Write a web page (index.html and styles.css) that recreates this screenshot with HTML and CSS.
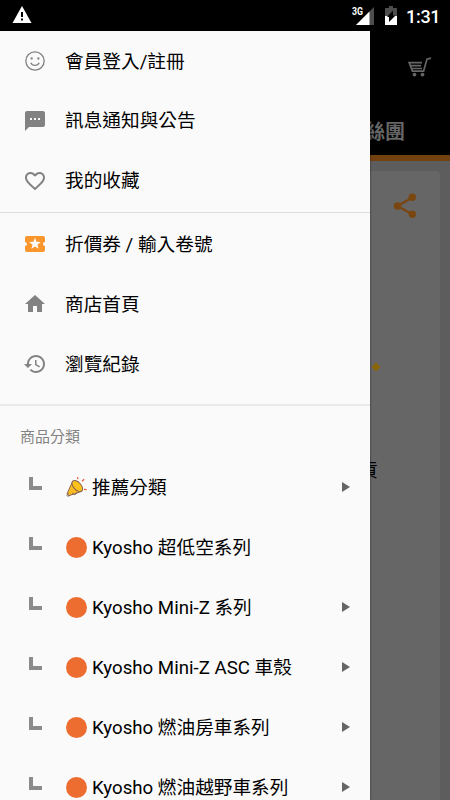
FILE: index.html
```html
<!DOCTYPE html>
<html lang="zh-TW">
<head>
    <meta charset="UTF-8">
    <meta name="viewport" content="width=device-width, initial-scale=1.0">
    <title>Kyosho</title>
    <link rel="stylesheet" href="styles.css">
</head>

<body>
    <div class="status-bar">
        <svg class="warning" width="20" height="18" viewBox="0 0 20 18">
            <path d="M10 0L19.5 17H.5z" fill="#fff"/>
            <path d="M9 6h2v5H9zM9 12.5h2v2H9z" fill="#000"/>
        </svg>
        <svg class="signal" width="24" height="20" viewBox="0 0 24 20">
            <path d="M22 1v18H4z" fill="#4d4d4d"/>
            <path d="M17.5 5.5V19H4z" fill="#fff"/>
            <text class="network" x="0" y="9" textLength="11" lengthAdjust="spacingAndGlyphs">3G</text>
        </svg>
        <svg class="battery" width="12" height="19" viewBox="0 0 12 19">
            <path d="M4 0h4v2h4v17H0V2h4z" fill="#4d4d4d"/>
            <path d="M0 10h12v9H0z" fill="#fff"/>
            <path d="M8 4.500v5h2.500L4 16v-5H2z" fill="#000"/>
        </svg>
        <span class="clock">1:31</span>
    </div>

    <div class="screen">
        <div class="page">
            <div class="toolbar">
                <svg width="24" height="20" viewBox="0 0 24 20" fill="none" stroke="#666" stroke-width="1.7">
                    <path d="M23 1.2l-4 .9-3.4 12H4.4L1.2 5.7H14M3 8.7h10M4 11.5h10"/>
                    <circle cx="6.5" cy="17.6" r="1.9" fill="#666" stroke="none"/>
                    <circle cx="14.5" cy="17.6" r="1.9" fill="#666" stroke="none"/>
                </svg>
            </div>
            <div class="tabs">粉絲團</div>
            <div class="tab-line"></div>
            <div class="card">
                <svg class="share" width="24" height="26" viewBox="0 0 24 26" fill="#7a4610">
                    <path d="M19.5 4.5L4.5 13l15 8.5" fill="none" stroke="#7a4610" stroke-width="2.2"/>
                    <circle cx="19.3" cy="4.3" r="3.7"/>
                    <circle cx="4.5" cy="13" r="3.7"/>
                    <circle cx="19.3" cy="21.3" r="3.7"/>
                </svg>
                <svg class="diamond" width="10" height="10" viewBox="0 0 10 10"><path d="M5 .5L9.5 5 5 9.5.5 5z" fill="#8c6508"/></svg>
                <div class="stock">現貨</div>
            </div>
        </div>

        <!-- 側邊選單 -->
        <div class="drawer">
            <div class="group group-account">
                <div class="item">
                    <svg class="icon" viewBox="0 0 24 24" fill="none" stroke="#828282" stroke-width="1.6">
                        <circle cx="12" cy="12" r="11"/>
                        <circle cx="8" cy="9" r="1.4" fill="#828282" stroke="none"/>
                        <circle cx="16" cy="9" r="1.4" fill="#828282" stroke="none"/>
                        <path d="M7 14c1.6 4.2 8.4 4.2 10 0"/>
                    </svg>
                    <span class="login">會員登入/註冊</span>
                </div>
                <div class="item">
                    <svg class="icon" viewBox="2 2 20 20" fill="#828282"><path d="M20 2H4c-1.1 0-2 .9-2 2v18l4-4h14c1.1 0 2-.9 2-2V4c0-1.100-.9-2-2-2zM9 11H7V9h2v2zm4 0h-2V9h2v2zm4 0h-2V9h2v2z"/></svg>
                    <span>訊息通知與公告</span>
                </div>
                <div class="item">
                    <svg class="icon" viewBox="2 2 20 20" fill="#828282"><path d="M16.500 3c-1.740 0-3.410.81-4.500 2.090C10.910 3.810 9.240 3 7.500 3 4.420 3 2 5.420 2 8.500c0 3.780 3.400 6.860 8.550 11.540L12 21.350l1.450-1.320C18.600 15.360 22 12.280 22 8.500 22 5.420 19.580 3 16.500 3zm-4.400 15.550l-.1.100-.1-.1C7.140 14.240 4 11.390 4 8.500 4 6.500 5.500 5 7.500 5c1.540 0 3.040.99 3.570 2.360h1.870C13.460 5.990 14.960 5 16.500 5c2 0 3.500 1.500 3.500 3.500 0 2.890-3.140 5.740-7.900 10.050z"/></svg>
                    <span>我的收藏</span>
                </div>
            </div>

            <div class="group group-shop">
                <div class="item">
                    <svg class="icon" viewBox="2 2 20 20" fill="#fb962d"><path d="M20 12c0-1.100.9-2 2-2V6c0-1.100-.9-2-2-2H4c-1.100 0-1.990.9-1.990 2v4c1.100 0 1.990.9 1.990 2s-.89 2-2 2v4c0 1.100.9 2 2 2h16c1.100 0 2-.9 2-2v-4c-1.100 0-2-.9-2-2zm-4.420 4.800L12 14.500l-3.580 2.300 1.080-4.120-3.290-2.690 4.240-.25L12 5.800l1.540 3.950 4.240.25-3.290 2.690 1.090 4.110z"/></svg>
                    <span>折價券 / 輸入卷號</span>
                </div>
                <div class="item">
                    <svg class="icon" viewBox="2 2 20 20" fill="#828282"><path d="M10 20v-6h4v6h5v-8h3L12 3 2 12h3v8z"/></svg>
                    <span>商店首頁</span>
                </div>
                <div class="item">
                    <svg class="icon history" viewBox="1 2 21 20" fill="#828282"><path d="M13 3c-4.970 0-9 4.030-9 9H1l3.890 3.890.07.140L9 12H6c0-3.870 3.130-7 7-7s7 3.130 7 7-3.130 7-7 7c-1.930 0-3.680-.79-4.940-2.060l-1.420 1.420C8.270 19.990 10.510 21 13 21c4.970 0 9-4.030 9-9s-4.030-9-9-9zm-1 5v5l4.280 2.540.72-1.210-3.500-2.080V8H12z"/></svg>
                    <span>瀏覽紀錄</span>
                </div>
            </div>

            <div class="heading">商品分類</div>
            <div class="categories">
                <div class="item">
                    <i class="branch"></i>
                    <svg class="horn" width="22" height="22" viewBox="0 0 22 22">
                        <path d="M7 4.500L1 17.800l2.300 1.700L16.500 15z" fill="#fdbd22" stroke="#84604e" stroke-width="1"/>
                        <path d="M3 17l-2 2.200.8 1 2.600-1M7 16.500c0 3 4.500 2.500 4.500-1" fill="none" stroke="#84604e" stroke-width="1"/>
                        <ellipse cx="11.800" cy="9.500" rx="4" ry="7" transform="rotate(-43 11.800 9.500)" fill="#fcc21b" stroke="#84604e" stroke-width="1"/>
                        <path d="M12 .2l.5 2M19 2.300l-2.200 2.200M18.800 13l2.800.3" stroke="#f05a35" stroke-width="1.300"/>
                    </svg>
                    <span>推薦分類</span>
                    <i class="arrow"></i>
                </div>
                <div class="item">
                    <i class="branch"></i>
                    <i class="dot"></i>
                    <span>Kyosho 超低空系列</span>
                </div>
                <div class="item">
                    <i class="branch"></i>
                    <i class="dot"></i>
                    <span>Kyosho Mini-Z 系列</span>
                    <i class="arrow"></i>
                </div>
                <div class="item">
                    <i class="branch"></i>
                    <i class="dot"></i>
                    <span>Kyosho Mini-Z ASC 車殼</span>
                    <i class="arrow"></i>
                </div>
                <div class="item">
                    <i class="branch"></i>
                    <i class="dot"></i>
                    <span>Kyosho 燃油房車系列</span>
                    <i class="arrow"></i>
                </div>
                <div class="item">
                    <i class="branch"></i>
                    <i class="dot"></i>
                    <span>Kyosho 燃油越野車系列</span>
                    <i class="arrow"></i>
                </div>
            </div>
        </div>
    </div>
</body>
</html>
```
FILE: styles.css
```css
* {
    box-sizing: border-box;
}

body {
    display: flex;
    flex-direction: column;
    width: 450px;
    height: 800px;
    margin: 0;
    overflow: hidden;
    background-color: #000;
    font-family: Roboto, "Noto Sans CJK TC", sans-serif;
}

.status-bar {
    display: flex;
    flex: none;
    align-items: center;
    height: 31px;
    padding: 0 11px 0 12px;
    color: #fff;
}

.warning {
    margin-bottom: 1px;
}

.signal {
    margin-left: auto;
    overflow: visible;
}

.network {
    font-size: 10.5px;
    font-weight: bold;
    fill: #fff;
    stroke: #000;
    stroke-width: 1px;
    paint-order: stroke;
}

.battery {
    margin: 0 9px 0 9px;
}

.clock {
    width: 33px;
    padding-top: 2px;
    font-size: 18px;
    font-weight: 500;
    line-height: 24px;
    letter-spacing: -0.3px;
    white-space: nowrap;
}

.screen {
    position: relative;
    flex: 1;
    min-height: 0;
}

/* 被遮罩壓暗的底層頁面 */
.page {
    display: flex;
    flex-direction: column;
    height: 100%;
    background-color: #5d5d5d;
}

.toolbar {
    display: flex;
    flex: none;
    align-items: center;
    justify-content: flex-end;
    height: 71px;
    padding-right: 18px;
    background-color: #000;
}

.tabs {
    flex: none;
    height: 53px;
    padding: 15px 45px 0 0;
    background-color: #000;
    color: #666;
    font-size: 20px;
    font-weight: bold;
    line-height: 30px;
    text-align: right;
}

.tab-line {
    flex: none;
    height: 6px;
    background-color: #734010;
}

.card {
    display: flex;
    flex: 1;
    flex-direction: column;
    align-items: flex-end;
    margin: 10px 10px 0;
    border-radius: 4px 4px 0 0;
    background-color: #666;
}

.share {
    margin: 22px 23px 0 0;
}

.diamond {
    margin: 143px 59px 0 0;
}

.stock {
    margin: 85px 62px 0 0;
    color: #000;
    font-size: 19px;
    line-height: 28px;
}

.drawer {
    position: absolute;
    top: 0;
    left: 0;
    width: 370px;
    height: 769px;
    overflow: hidden;
    background-color: #fafafa;
    box-shadow: 0 0 2px rgba(0, 0, 0, 0.6);
}

.group-account {
    height: 182px;
    border-bottom: 1px solid #dedede;
}

.group-shop {
    height: 193px;
    padding-top: 1px;
    border-bottom: 2px solid #e9e9e9;
}

.item {
    display: flex;
    align-items: center;
    height: 60px;
    padding: 0 20px 0 25px;
    color: #000;
    font-size: 18.67px;
    line-height: 28px;
    white-space: nowrap;
}

.login,
.group-shop span,
.categories span {
    padding-top: 2px;
}

.icon {
    width: 20px;
    height: 20px;
    margin-right: 20px;
}

.history {
    width: 21px;
    margin-left: -1px;
}

.heading {
    height: 51px;
    padding: 18px 0 0 20px;
    color: #828282;
    font-size: 15px;
    line-height: 26px;
}

.categories .item {
    padding-left: 29px;
}

.branch {
    width: 13px;
    height: 13px;
    margin: -7px 24px 0 0;
    border-bottom: 4px solid #8b8b8b;
    border-left: 4px solid #8b8b8b;
}

.dot,
.horn {
    width: 21px;
    height: 21px;
    margin-right: 5px;
}

.dot {
    border-radius: 50%;
    background-color: #ed6c30;
}

.arrow {
    margin-left: auto;
    border-top: 5.5px solid transparent;
    border-bottom: 5.5px solid transparent;
    border-left: 8px solid #666;
}
```
